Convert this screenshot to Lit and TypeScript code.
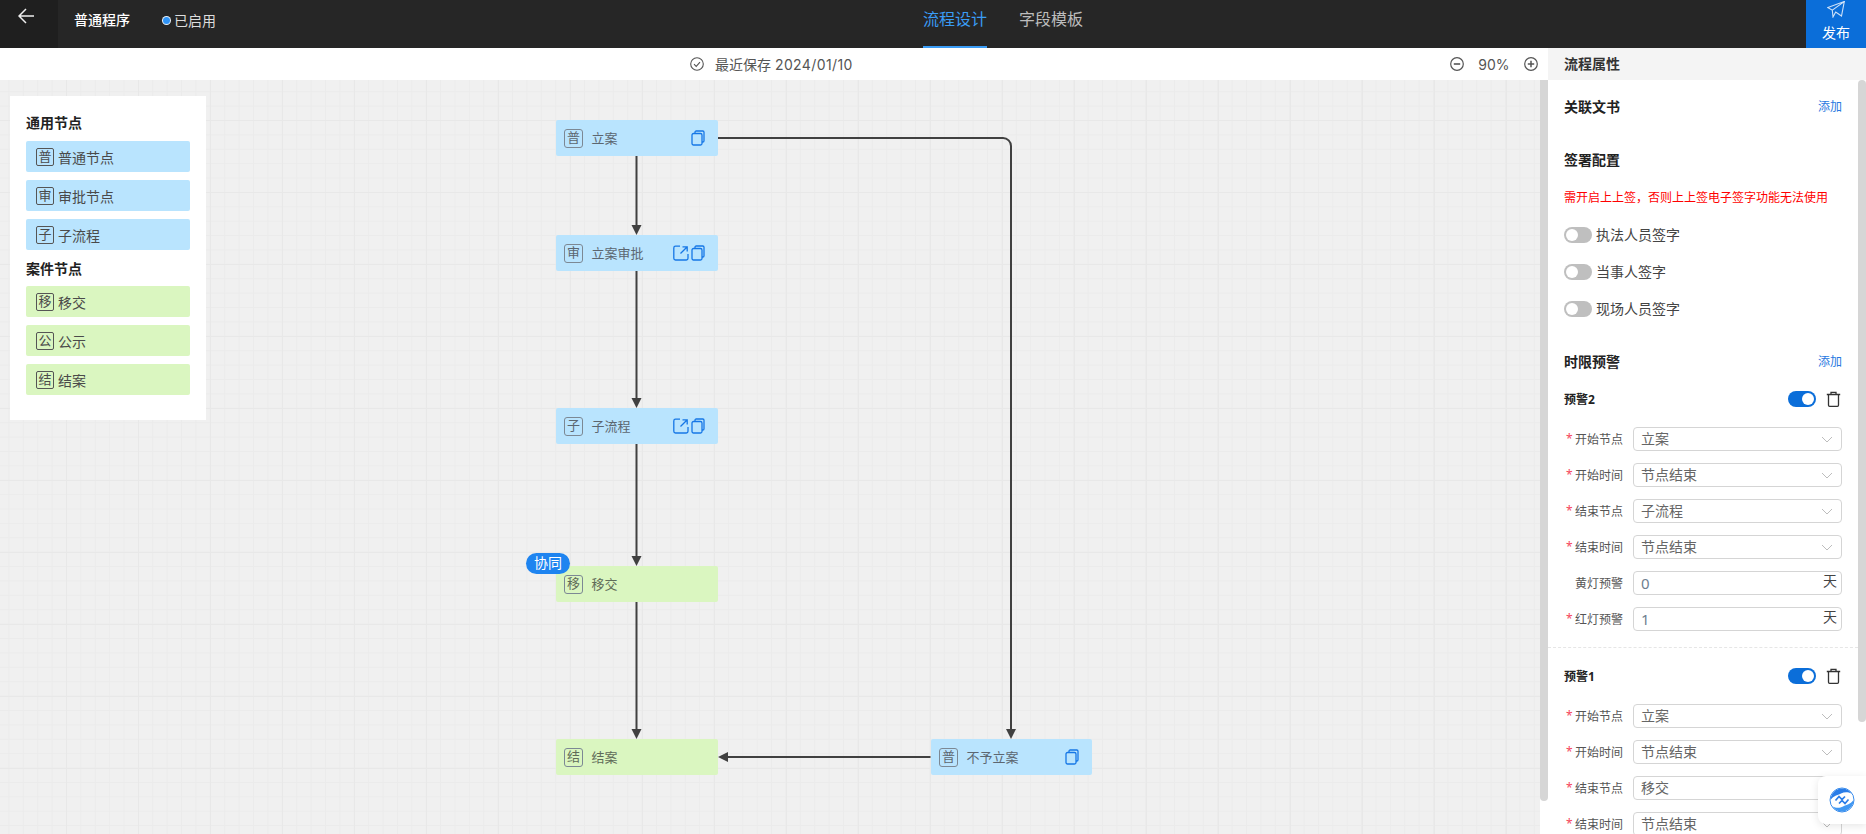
import { LitElement, html, css, svg } from "lit";
import { customElement } from "lit/decorators.js";

const copyIcon = html`<svg class="ic" width="14" height="16" viewBox="0 0 14 16" fill="none" stroke="#1677e6" stroke-width="1.3"><path d="M4 3V2.2C4 1.5 4.5 1 5.2 1h6.6C12.500 1 13 1.500 13 2.200v8.600c0 .7-.5 1.200-1.200 1.200H11"/><rect x="1" y="3.500" width="10" height="11.500" rx="1.500"/></svg>`;
const openIcon = html`<svg class="ic" width="16" height="16" viewBox="0 0 16 16" fill="none" stroke="#1677e6" stroke-width="1.3"><path d="M7 1.200H2.500C1.500 1.200 .8 1.900 .8 2.900v10.400c0 1 .7 1.700 1.700 1.700h10.800c1 0 1.700-.7 1.700-1.700V9"/><path d="M7.500 8.500 13.800 2.200M9.500 1.800h4.700v4.700"/></svg>`;
const chevron = html`<svg class="chev" width="12" height="7" viewBox="0 0 12 7" fill="none" stroke="#bdbdbd" stroke-width="1"><path d="M1 1l5 5 5-5"/></svg>`;
const trash = html`<svg width="15" height="16" viewBox="0 0 15 16" fill="none" stroke="#333" stroke-width="1.300"><path d="M.8 3.500h13.400M5 3.300V1.300h5v2"/><path d="M2.500 3.500v10.700c0 .7.500 1.100 1.100 1.100h7.800c.6 0 1.100-.4 1.100-1.100V3.500"/></svg>`;

interface FlowNode { x: number; y: number; w: number; badge: string; label: string; tone: string; open?: boolean; copy?: boolean; }
const flowNodes: FlowNode[] = [
  { x: 555.5, y: 40, w: 162, badge: "普", label: "立案", tone: "blue", copy: true },
  { x: 555.5, y: 155, w: 162, badge: "审", label: "立案审批", tone: "blue", open: true, copy: true },
  { x: 555.5, y: 328, w: 162, badge: "子", label: "子流程", tone: "blue", open: true, copy: true },
  { x: 555.5, y: 486, w: 162, badge: "移", label: "移交", tone: "green" },
  { x: 555.5, y: 659, w: 162, badge: "结", label: "结案", tone: "green" },
  { x: 930.5, y: 659, w: 161, badge: "普", label: "不予立案", tone: "blue", copy: true },
];

const generalItems = [["普", "普通节点"], ["审", "审批节点"], ["子", "子流程"]];
const caseItems = [["移", "移交"], ["公", "公示"], ["结", "结案"]];

type Field = { label: string; value: string; req: boolean; unit?: boolean };
const warn2: Field[] = [
  { label: "开始节点", value: "立案", req: true },
  { label: "开始时间", value: "节点结束", req: true },
  { label: "结束节点", value: "子流程", req: true },
  { label: "结束时间", value: "节点结束", req: true },
  { label: "黄灯预警", value: "0", req: false, unit: true },
  { label: "红灯预警", value: "1", req: true, unit: true },
];
const warn1: Field[] = [
  { label: "开始节点", value: "立案", req: true },
  { label: "开始时间", value: "节点结束", req: true },
  { label: "结束节点", value: "移交", req: true },
  { label: "结束时间", value: "节点结束", req: true },
];

@customElement("app-root")
export class AppRoot extends LitElement {
  static styles = css`
    :host { display: block; width: 1866px; height: 834px; overflow: hidden; position: relative;
      font-family: "Noto Sans", "Noto Sans CJK SC", sans-serif; font-size: 14px; color: #333; background: #fff; }
    * { box-sizing: border-box; }
    .header { height: 48px; background: #262626; display: flex; color: #fff; position: relative; }
    .back { width: 58px; background: #1f1f1f; display: flex; padding: 8px 0 0 18px; }
    .title { margin-left: 16px; line-height: 40px; font-weight: 500; }
    .status { margin-left: 33px; display: flex; align-items: center; gap: 3px; height: 40px; color: #ddd; }
    .dot { width: 7px; height: 7px; border-radius: 50%; background: #2f93f5; box-shadow: 0 0 0 1px #e8f0f8; margin-right: 1px; }
    .tabs { position: absolute; left: 923px; top: 0; display: flex; gap: 32px; }
    .tab { font-size: 16px; height: 48px; line-height: 38px; color: #bdbdbd; }
    .tab.on { color: #3a9cf5; border-bottom: 2px solid #3a9cf5; }
    .publish { margin-left: auto; width: 60px; background: #0b6ed9; display: flex; flex-direction: column; align-items: center; padding-top: 1px; }
    .publish span { line-height: 20px; margin-top: 5px; }
    .main { display: flex; height: 786px; }
    .left { width: 1548px; display: flex; flex-direction: column; position: relative; }
    .toolbar { height: 32px; background: #fff; display: flex; align-items: center; padding-left: 690px; color: #555; }
    .saved { margin-left: 11px; font-family: Inter, "Noto Sans CJK SC", sans-serif; padding-bottom: 1px; }
    .saved b { font-weight: 400; letter-spacing: .4px; }
    .zoombox { margin-left: auto; display: flex; align-items: center; margin-right: 10px; color: #555; }
    .zoombox .pct { width: 60px; text-align: center; flex: none; font-family: Inter, sans-serif; }
    .canvas { flex: 1; width: 1540px; position: relative; overflow: hidden; background-color: #f0f0f0;
      background-image:
        linear-gradient(#e8e8e8 1px, transparent 1px), linear-gradient(90deg, #e8e8e8 1px, transparent 1px),
        linear-gradient(#ebebeb 1px, transparent 1px), linear-gradient(90deg, #ebebeb 1px, transparent 1px);
      background-size: 72px 72px, 72px 72px, 14.4px 14.4px, 14.4px 14.4px;
      background-position: 0 40px, 66px 0, 0 11.200px, 8.400px 0; }
    .edges { position: absolute; left: 0; top: 0; }
    .node { position: absolute; height: 36px; display: flex; align-items: center; padding: 0 13px 0 8.500px; border-radius: 2px; color: #5c6670; }
    .node.blue { background: #b9e4fe; }
    .node.green { background: #daf6c0; }
    .node.green { color: #5f6b58; }
    .nb { width: 19px; height: 19px; border: 1px solid #7c8894; border-radius: 3px; display: flex; align-items: center; justify-content: center; line-height: 1; flex: none; padding-bottom: 1px; font-size: 13px; }
    .nl { margin-left: 8.500px; padding-bottom: 2px; font-size: 13px; }
    .acts { margin-left: auto; display: flex; align-items: center; gap: 2px; }
    .ic { display: block; }
    .tag { position: absolute; left: 526px; top: 473px; width: 44px; height: 21px; line-height: 20px; text-align: center; background: #1e84f0; color: #fff; border-radius: 10.500px; }
    .palette { position: absolute; left: 10px; top: 16px; width: 196px; height: 324px; background: #fff; padding: 16px; }
    .ptitle { font-weight: 700; line-height: 22px; color: #222; height: 29px; }
    .ptitle.second { height: 28px; margin-top: 8px; line-height: 22px; }
    .pitem { height: 31px; margin-bottom: 8px; border-radius: 2px; display: flex; align-items: center; padding-left: 10px; gap: 4px; color: #4a4a4a; }
    .pitem.blue { background: #b9e4fe; }
    .pitem.green { background: #daf6c0; }
    .pb { width: 18px; height: 18px; border: 1px solid #555; border-radius: 2px; display: flex; align-items: center; justify-content: center; line-height: 1; font-size: 13px; }
    .bar-a { position: absolute; left: 1540px; top: 32px; width: 8px; height: 721px; background: #d6d6d6; border-radius: 0 0 4px 4px; }
    .panel { width: 318px; position: relative; margin-left: 0; overflow: hidden; }
    .phead { height: 32px; background: #f4f4f4; line-height: 32px; padding-left: 16px; font-weight: 700; color: #333; }
    .bar-b { position: absolute; right: 0; top: 32px; width: 8px; height: 642px; background: #d6d6d6; border-radius: 4px; }
    .pbody { width: 310px; padding: 0 16px; }
    .sec { display: flex; justify-content: space-between; align-items: center; font-weight: 700; color: #222; height: 22px; padding-bottom: 2px; }
    .sec a { font-weight: 400; font-size: 12px; color: #2878e0; }
    .doc { margin-top: 16px; }
    .sign { margin-top: 31px; }
    .warnred { color: #f00; font-size: 12px; line-height: 18px; margin-top: 18px; white-space: nowrap; }
    .sw { display: flex; align-items: center; gap: 4px; height: 20px; margin-top: 17px; color: #444; }
    .sw span { padding-bottom: 2px; }
    .swfirst { margin-top: 18px; }
    .toggle { width: 28px; height: 16px; border-radius: 8px; background: #bfbfbf; position: relative; flex: none; }
    .toggle i { position: absolute; left: 2px; top: 2px; width: 12px; height: 12px; border-radius: 50%; background: #fff; }
    .toggle.on { background: #0b6ed9; }
    .toggle.on i { left: 14px; }
    .limit { margin-top: 32px; }
    .wh { display: flex; align-items: center; height: 20px; font-size: 12px; font-weight: 700; color: #222; }
    .wh .toggle { margin-left: auto; }
    .wh svg { margin-left: 10px; margin-right: 1px; }
    .w2 { margin-top: 16px; }
    .frow { display: flex; align-items: center; height: 24px; margin-top: 12px; }
    .wh + .frow { margin-top: 18px; }
    .flabel { width: 69px; flex: none; display: flex; font-size: 12px; color: #555; white-space: nowrap; padding-left: 2px; }
    .star { width: 9px; color: #f5455c; flex: none; }
    .input { width: 209px; height: 24px; border: 1px solid #d5d5d5; border-radius: 4px; display: flex; align-items: center; padding: 0 7px; color: #666; background: #fff; flex: none; line-height: 22px; }
    .input .num { color: #6f7f8f; font-size: 15px; }
    .chev { margin-left: auto; margin-right: 1px; }
    .unit { margin-left: auto; margin-top: -4px; margin-right: -3px; color: #444; }
    .dash { border-top: 1px dashed #e6e6e6; margin: 16px -16px 0; }
    .w1 { margin-top: 18px; }
    .float { position: absolute; right: 0; top: 776px; width: 48px; height: 48px; background: #fff; border-radius: 8px 0 0 8px; box-shadow: 0 2px 8px rgba(0,0,0,.1); display: flex; align-items: center; justify-content: center; }
  `;

  private edges() {
    const c = "#404040";
    const line = (d: string) => svg`<path d=${d} fill="none" stroke=${c} stroke-width="2"/>`;
    const down = (x: number, y: number) => svg`<path d="M${x - 5} ${y - 10}h10l-5 10z" fill=${c}/>`;
    return html`<svg class="edges" width="1540" height="754">
      ${line("M636.500 76V146")}${down(636.5, 155)}
      ${line("M636.500 191V318")}${down(636.5, 328)}
      ${line("M636.500 364V476")}${down(636.5, 486)}
      ${line("M636.500 522V650")}${down(636.5, 659)}
      ${line("M717.500 58H1003a8 8 0 0 1 8 8V650")}${down(1011, 659)}
      ${line("M930.500 677H727")}
      <path d="M718 677l10-5v10z" fill=${c}/>
    </svg>`;
  }

  private field(f: Field) {
    return html`<div class="frow">
      <div class="flabel"><span class="star">${f.req ? "*" : ""}</span><span>${f.label}</span></div>
      <div class="input">
        ${f.unit
          ? html`<span class="num">${f.value}</span><span class="unit">天</span>`
          : html`<span>${f.value}</span>${chevron}`}
      </div>
    </div>`;
  }

  private warnHead(name: string, cls: string) {
    return html`<div class="wh ${cls}"><span>${name}</span><div class="toggle on"><i></i></div>${trash}</div>`;
  }

  render() {
    return html`
      <div class="header">
        <div class="back">
          <svg width="16" height="16" viewBox="0 0 16 16" fill="none" stroke="#eee" stroke-width="1.500"><path d="M16 8H1M8 1 1 8l7 7"/></svg>
        </div>
        <div class="title">普通程序</div>
        <div class="status"><span class="dot"></span><span>已启用</span></div>
        <div class="tabs"><div class="tab on">流程设计</div><div class="tab">字段模板</div></div>
        <div class="publish">
          <svg width="18" height="17" viewBox="0 0 18 17" fill="none" stroke="#cfe2f8" stroke-width="1.100"><path d="M17.300.6 .8 6.500l4.500 2.700L17.300.6 14.500 15 8.700 11l-2.700 5-.7-6.800"/></svg>
          <span>发布</span>
        </div>
      </div>
      <div class="main">
        <div class="left">
          <div class="toolbar">
            <svg width="14" height="14" viewBox="0 0 14 14" fill="none" stroke="#555" stroke-width="1.100"><circle cx="7" cy="7" r="6.300"/><path d="M4 7.200l2.200 2.200L10 5.200"/></svg>
            <span class="saved">最近保存 <b>2024/01/10</b></span>
            <div class="zoombox">
              <svg width="14" height="14" viewBox="0 0 14 14" fill="none" stroke="#555" stroke-width="1.200"><circle cx="7" cy="7" r="6.300"/><path d="M3.800 7h6.400" stroke-width="1.600"/></svg>
              <span class="pct">90%</span>
              <svg width="14" height="14" viewBox="0 0 14 14" fill="none" stroke="#555" stroke-width="1.200"><circle cx="7" cy="7" r="6.300"/><path d="M3.800 7h6.400M7 3.800v6.400" stroke-width="1.500"/></svg>
            </div>
          </div>
          <div class="canvas">
            ${this.edges()}
            ${flowNodes.map(n => html`
              <div class="node ${n.tone}" style="left:${n.x}px;top:${n.y}px;width:${n.w}px">
                <span class="nb">${n.badge}</span><span class="nl">${n.label}</span>
                <span class="acts">${n.open ? openIcon : ""}${n.copy ? copyIcon : ""}</span>
              </div>`)}
            <div class="tag">协同</div>
            <div class="palette">
              <div class="ptitle">通用节点</div>
              ${generalItems.map(i => html`<div class="pitem blue"><span class="pb">${i[0]}</span><span>${i[1]}</span></div>`)}
              <div class="ptitle second">案件节点</div>
              ${caseItems.map(i => html`<div class="pitem green"><span class="pb">${i[0]}</span><span>${i[1]}</span></div>`)}
            </div>
          </div>
          <div class="bar-a"></div>
        </div>
        <div class="panel">
          <div class="phead">流程属性</div>
          <div class="pbody">
            <div class="sec doc"><span>关联文书</span><a>添加</a></div>
            <div class="sec sign"><span>签署配置</span></div>
            <div class="warnred">需开启上上签，否则上上签电子签字功能无法使用</div>
            <div class="sw swfirst"><div class="toggle"><i></i></div><span>执法人员签字</span></div>
            <div class="sw"><div class="toggle"><i></i></div><span>当事人签字</span></div>
            <div class="sw"><div class="toggle"><i></i></div><span>现场人员签字</span></div>
            <div class="sec limit"><span>时限预警</span><a>添加</a></div>
            ${this.warnHead("预警2", "w2")}
            ${warn2.map(f => this.field(f))}
            <div class="dash"></div>
            ${this.warnHead("预警1", "w1")}
            ${warn1.map(f => this.field(f))}
          </div>
          <div class="bar-b"></div>
        </div>
      </div>
      <div class="float">
        <svg width="26" height="26" viewBox="0 0 26 26" fill="none">
          <path d="M1.500 13A11.500 11.500 0 0 1 22.500 6.500C18.500 4.500 15 5 12 6.500 8 8.500 5 8.500 1.500 13z" fill="#2a7de8"/>
          <path d="M24.500 13A11.500 11.500 0 0 1 3.500 19.500c4 2 7.500 1.500 10.500 0 4-2 7-2 10.500-6.500z" fill="#3f97f2"/>
          <circle cx="13" cy="13" r="12" stroke="#3a8cec" stroke-width="1"/>
          <path d="M6.500 13.500 10 9.500l3 3 3-3M10 16.500l3-3 3 3 3.500-4" stroke="#2a7de8" stroke-width="1.700"/>
        </svg>
      </div>
    `;
  }
}
